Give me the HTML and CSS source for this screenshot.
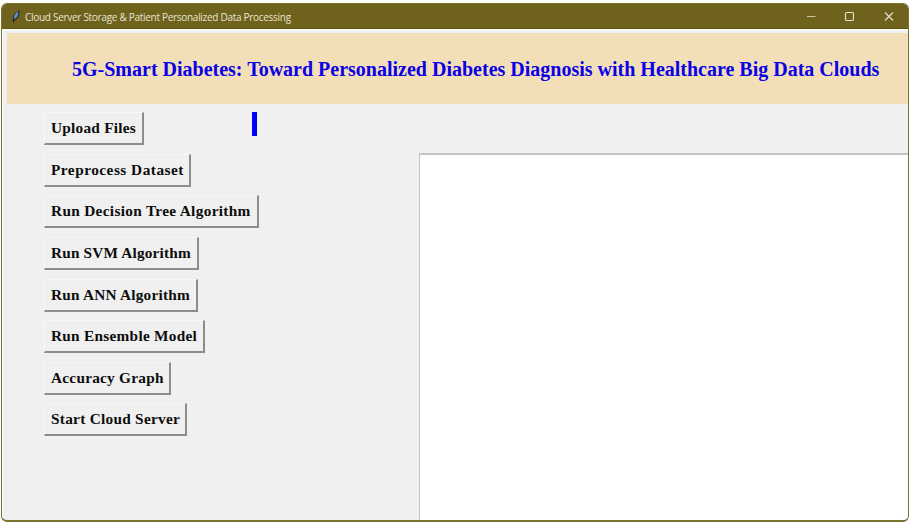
FILE: index.html
```html
<!DOCTYPE html>
<html lang="en">
<head>
<meta charset="utf-8">
<title>Cloud Server Storage &amp; Patient Personalized Data Processing</title>
<link rel="stylesheet" href="styles.css">
</head>
<body>
<div class="window">
  <header class="titlebar">
    <svg class="feather" width="10" height="14" viewBox="0 0 10 14">
      <path d="M2.3 12.8C.7 8.4 2.8 2.7 8.2 .6 9.5 4.2 7.4 8.7 3.7 10.8Z" fill="#26272a"/>
      <path d="M3.2 9.4C2.4 5.7 4.2 2.9 7.4 1.4 8 4.7 6.1 7.8 3.2 9.4Z" fill="#4c7fb8"/>
      <path d="M3.6 7.5 6.3 3" stroke="#8fb2d4" stroke-width=".7" fill="none"/>
    </svg>
    <span class="caption">Cloud Server Storage &amp; Patient Personalized Data Processing</span>
    <svg class="controls" width="90" height="12" viewBox="0 0 90 12" fill="none" stroke="#e8e5d2" stroke-width="1.1">
      <path d="M1 5.5H9.5" stroke-width="1" stroke="#c9c4a0"/>
      <rect x="39.5" y="1.5" width="8" height="8" rx="1.2"/>
      <path d="M79 1.5 87 9.5M87 1.5 79 9.5"/>
    </svg>
  </header>
  <main class="client">
    <h1 class="banner"><span class="heading">5G-Smart Diabetes: Toward Personalized Diabetes Diagnosis with Healthcare Big Data Clouds</span></h1>
    <div class="workspace">
      <nav class="actions">
        <button class="upload">Upload Files</button>
        <button class="preprocess">Preprocess Dataset</button>
        <button class="tree">Run Decision Tree Algorithm</button>
        <button class="svm">Run SVM Algorithm</button>
        <button class="ann">Run ANN Algorithm</button>
        <button class="ensemble">Run Ensemble Model</button>
        <button class="graph">Accuracy Graph</button>
        <button class="server">Start Cloud Server</button>
      </nav>
      <div class="path-label"></div>
      <div class="output"></div>
    </div>
  </main>
</div>
</body>
</html>
```
FILE: styles.css
```css
* { box-sizing: border-box; }
body { margin: 0; background: #fff; overflow: hidden; }
.window {
  width: 908px; height: 519px; margin: 3px 0 0 1px;
  display: flex; flex-direction: column;
  border: 1px solid #7b7130; border-bottom-width: 2px;
  border-radius: 6px; overflow: hidden; background: #f0f0f0;
}
.titlebar {
  flex: none; height: 25px; display: flex; align-items: center;
  background: #6e621c; border-bottom: 1px solid #62570f;
  padding: 0 12px 0 9px;
}
.feather { flex: none; margin-top: 1px; }
.caption {
  margin-left: 4px; margin-top: 2px; white-space: nowrap;
  font: 10px/14px "Open Sans", "Noto Sans", sans-serif;
  letter-spacing: -0.29px; color: #e8e5d2;
}
.controls { margin-left: auto; flex: none; margin-top: 1px; }
.client {
  flex: 1; display: flex; flex-direction: column; min-height: 0;
  border-top: 2px solid #fbfbfb; border-left: 1px solid #fbfbfb;
}
.banner {
  flex: none; margin: 2px 0 0 4px; height: 71px;
  display: flex; align-items: center; padding-left: 65px;
  background: #f2dfb8;
}
.heading {
  font: bold 20px/24px "Liberation Serif", serif;
  white-space: nowrap; color: #0b00e6;
}
.workspace { flex: 1; min-height: 0; display: flex; align-items: flex-start; }
.actions {
  width: 249px; flex: none; padding: 8px 0 0 41px;
  display: flex; flex-direction: column; align-items: flex-start; gap: 8.65px;
}
.actions button {
  height: 33px; padding: 0 0 0 6px; text-align: left; white-space: nowrap;
  font: bold 15.3px/20px "Liberation Serif", serif; color: #0c0c0c;
  background: #f0f0f0; border: solid; border-width: 1px 2px 2px 1px;
  border-color: #f7f7f7 #8c8c8c #8c8c8c #f7f7f7;
}
.actions .upload { width: 100px; letter-spacing: 0.25px; }
.actions .preprocess { width: 147px; letter-spacing: 0.5px; }
.actions .tree { width: 215px; letter-spacing: 0.33px; }
.actions .svm { width: 155px; letter-spacing: 0.18px; }
.actions .ann { width: 154px; letter-spacing: 0.22px; }
.actions .ensemble { width: 161px; letter-spacing: 0.28px; }
.actions .graph { width: 127px; letter-spacing: 0.25px; }
.actions .server { width: 143px; letter-spacing: 0.28px; }
.path-label { flex: none; width: 5px; height: 24px; margin-top: 8px; background: #0000fa; }
.output {
  flex: 1; align-self: stretch; margin: 49px 0 0 162px;
  background: #fff; border: solid #c4c4c4; border-width: 2px 0 0 1px;
}
```
